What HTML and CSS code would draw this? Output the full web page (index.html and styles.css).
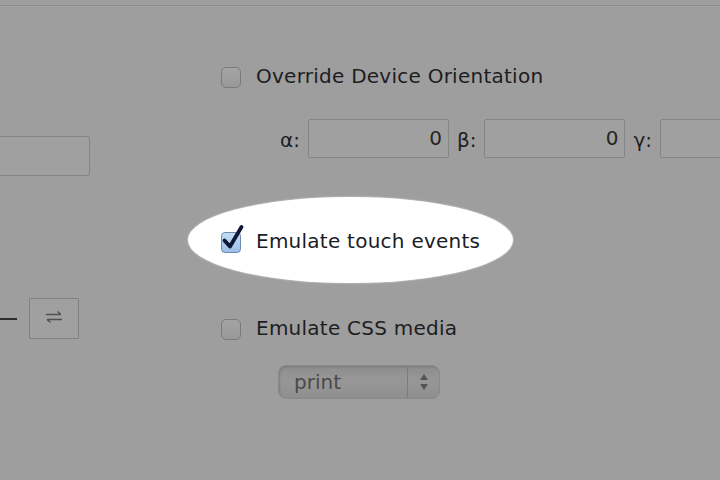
FILE: index.html
```html
<!DOCTYPE html>
<html>
<head>
<meta charset="utf-8">
<link rel="stylesheet" href="styles.css">
</head>
<body>
<div class="topline"></div>
<div class="panel">
  <div class="left">
    <div class="field-cut"></div>
    <div class="swap-row">
      <span class="dash"></span>
      <button class="swap" type="button">
        <svg width="22" height="14" viewBox="0 0 22 14"><path d="M3 4.5H18M14.5 1.5L18 4.5M19 9.5H4M7.5 12.5L4 9.5" fill="none" stroke="#4f4f4f" stroke-width="1.3"/></svg>
      </button>
    </div>
  </div>
  <div class="right">
    <label class="opt">
      <span class="cb"></span>
      <span class="opt-text">Override Device Orientation</span>
    </label>
    <div class="angles">
      <span class="ang">α:</span>
      <span class="num">0</span>
      <span class="ang">β:</span>
      <span class="num">0</span>
      <span class="ang">γ:</span>
      <span class="num"></span>
    </div>
    <label class="opt opt-spot">
      <span class="cb cb-on">
        <svg class="tick" width="24" height="26" viewBox="0 0 24 26"><path d="M3.5 16.5L9 22.5L20.5 3" fill="none" stroke="#0f1634" stroke-width="3.8" stroke-linecap="round" stroke-linejoin="round"/></svg>
      </span>
      <span class="opt-text">Emulate touch events</span>
    </label>
    <label class="opt opt-css">
      <span class="cb"></span>
      <span class="opt-text">Emulate CSS media</span>
    </label>
    <div class="select">
      <span class="sel-val">print</span>
      <span class="sel-arrows">
        <svg width="10" height="18" viewBox="0 0 10 18"><path d="M5 1L9 7H1Z M5 17L9 11H1Z" fill="#555"/></svg>
      </span>
    </div>
  </div>
</div>
</body>
</html>
```
FILE: styles.css
```css
html, body {
  margin: 0;
  padding: 0;
  width: 720px;
  height: 480px;
  overflow: hidden;
  background: #9e9e9e;
  font-family: "DejaVu Sans", "Liberation Sans", sans-serif;
  color: #1d1d1f;
}
.topline {
  height: 5px;
  border-bottom: 1px solid #8c8c8c;
  box-shadow: 0 1px 0 #a6a6a6;
}
.panel {
  display: flex;
  width: 720px;
  overflow: hidden;
}
.left {
  flex: none;
  width: 221px;
  padding-top: 130px;
}
.field-cut {
  width: 160px;
  height: 38px;
  margin-left: -72px;
  border: 1px solid #848484;
  border-radius: 2px;
  background: #a0a0a0;
}
.swap-row {
  display: flex;
  align-items: center;
  margin-top: 122px;
}
.dash {
  width: 17px;
  height: 2px;
  background: #2e2e2e;
}
.swap {
  margin: 0 0 0 12px;
  padding: 0 0 4px 0;
  width: 50px;
  height: 41px;
  border: 1px solid #808080;
  border-radius: 1px;
  background: #a0a0a0;
  display: flex;
  align-items: center;
  justify-content: center;
}
.right {
  flex: 1;
  min-width: 0;
  padding-top: 55px;
  display: flex;
  flex-direction: column;
  align-items: flex-start;
}
.opt {
  display: flex;
  align-items: center;
  height: 30px;
  font-size: 20px;
  line-height: 30px;
  letter-spacing: 0.25px;
  position: relative;
}
.cb {
  flex: none;
  position: relative;
  box-sizing: border-box;
  width: 20px;
  height: 21px;
  margin-right: 15px;
  border: 1.5px solid #7a7a7a;
  border-radius: 5px;
  background: linear-gradient(#a4a4a4, #989898);
  top: 1px;
}
.cb-on {
  border-color: #6e8cac;
  background: linear-gradient(#c2dcf4, #9cc0e6);
  border-radius: 4px;
}
.tick {
  position: absolute;
  left: -1px;
  top: -9px;
}
.opt-text {
  white-space: nowrap;
}
.angles {
  display: flex;
  align-items: center;
  gap: 8px;
  margin-top: 28px;
  margin-left: 59px;
  font-size: 20px;
  height: 39px;
}
.ang {
  line-height: 39px;
  position: relative;
  top: 2px;
}
.num {
  flex: none;
  box-sizing: border-box;
  width: 141px;
  height: 39px;
  border: 1px solid #858585;
  border-radius: 2px;
  background: #a0a0a0;
  text-align: right;
  padding-right: 6px;
  line-height: 37px;
  color: #262626;
}
.opt-spot {
  margin-top: 68px;
}
.opt-spot::before {
  content: "";
  position: absolute;
  left: -33px;
  top: -29px;
  width: 325px;
  height: 86px;
  border-radius: 50%;
  background: #ffffff;
  box-shadow: 0 0 2px rgba(255, 255, 255, 0.7);
  z-index: 0;
}
.opt-spot .cb {
  z-index: 1;
}
.opt-spot .opt-text {
  color: #1a1c26;
  position: relative;
  z-index: 1;
}
.opt-css {
  margin-top: 57px;
}
.select {
  display: flex;
  align-items: stretch;
  margin-top: 22px;
  margin-left: 57px;
  width: 162px;
  height: 34px;
  box-sizing: border-box;
  border: 1px solid #8a8a8a;
  border-radius: 8px;
  background: linear-gradient(#8d8d8d, #979797 45%, #8f8f8f);
  box-shadow: inset 1px 1px 2px rgba(0,0,0,0.15);
}
.sel-val {
  flex: 1;
  font-size: 20px;
  line-height: 32px;
  padding-left: 15px;
  color: #4a4a4a;
}
.sel-arrows {
  width: 31px;
  border-left: 1px solid #7c7c7c;
  display: flex;
  align-items: center;
  justify-content: center;
}
```
